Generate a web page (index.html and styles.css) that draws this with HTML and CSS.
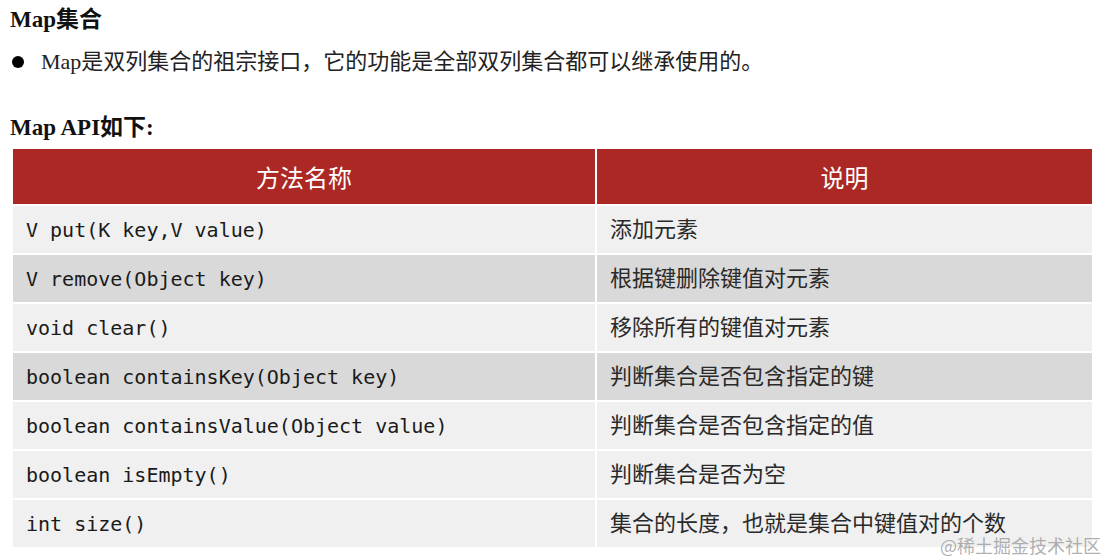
FILE: index.html
```html
<!DOCTYPE html>
<html lang="zh">
<head>
<meta charset="utf-8">
<link rel="stylesheet" href="styles.css">
</head>
<body>
<div class="page">
  <h1 class="title">Map集合</h1>
  <p class="bullet"><span class="dot"></span><span class="bullet-text">Map是双列集合的祖宗接口，它的功能是全部双列集合都可以继承使用的。</span></p>
  <h2 class="subtitle">Map API如下:</h2>
  <div class="api-table">
    <div class="cell head">方法名称</div>
    <div class="cell head">说明</div>
    <div class="cell code light">V put(K key,V value)</div>
    <div class="cell desc light">添加元素</div>
    <div class="cell code dark">V remove(Object key)</div>
    <div class="cell desc dark">根据键删除键值对元素</div>
    <div class="cell code light">void clear()</div>
    <div class="cell desc light">移除所有的键值对元素</div>
    <div class="cell code dark">boolean containsKey(Object key)</div>
    <div class="cell desc dark">判断集合是否包含指定的键</div>
    <div class="cell code light">boolean containsValue(Object value)</div>
    <div class="cell desc light">判断集合是否包含指定的值</div>
    <div class="cell code light">boolean isEmpty()</div>
    <div class="cell desc light">判断集合是否为空</div>
    <div class="cell code light">int size()</div>
    <div class="cell desc light">集合的长度，也就是集合中键值对的个数</div>
  </div>
  <div class="watermark">@稀土掘金技术社区</div>
</div>
</body>
</html>
```

FILE: styles.css
```css
html, body {
  margin: 0;
  padding: 0;
  background: #ffffff;
}
.page {
  position: relative;
  width: 1111px;
  height: 557px;
  overflow: hidden;
  font-family: "Liberation Serif", "Noto Sans CJK SC", serif;
  color: #111;
}
.title {
  margin: 0;
  padding: 6px 0 0 10px;
  font-size: 23px;
  line-height: 28px;
  font-weight: bold;
}
.bullet {
  margin: 14px 0 0 0;
  padding-left: 12px;
  display: flex;
  align-items: center;
  height: 28px;
  font-size: 22px;
  line-height: 28px;
  color: #222;
}
.dot {
  width: 12px;
  height: 12px;
  border-radius: 50%;
  background: #000;
  margin-right: 17px;
  flex: none;
}
.subtitle {
  margin: 38px 0 0 0;
  padding-left: 10px;
  font-size: 23px;
  line-height: 28px;
  font-weight: bold;
}
.api-table {
  margin: 7px 0 0 13px;
  width: 1079px;
  display: grid;
  grid-template-columns: 582px 495px;
  column-gap: 2px;
  row-gap: 2px;
}
.cell {
  height: 47px;
  display: flex;
  align-items: center;
  padding-left: 13px;
}
.head {
  height: 55px;
  background: #ab2824;
  color: #fff;
  justify-content: center;
  padding-left: 0;
  font-size: 24px;
  font-family: "Liberation Serif", "Noto Sans CJK SC", serif;
}
.light {
  background: #f0f0f0;
}
.dark {
  background: #d9d9d9;
}
.code {
  font-family: "DejaVu Sans Mono", "Liberation Mono", monospace;
  font-size: 20px;
  color: #1a1a1a;
}
.desc {
  font-family: "Liberation Serif", "Noto Sans CJK SC", serif;
  font-size: 22px;
  line-height: 20px;
  color: #2a2a2a;
}
.watermark {
  position: absolute;
  right: 10px;
  bottom: 2px;
  font-family: "Noto Sans CJK SC", sans-serif;
  font-size: 18px;
  line-height: 20px;
  color: rgba(150, 150, 150, 0.75);
}
```
